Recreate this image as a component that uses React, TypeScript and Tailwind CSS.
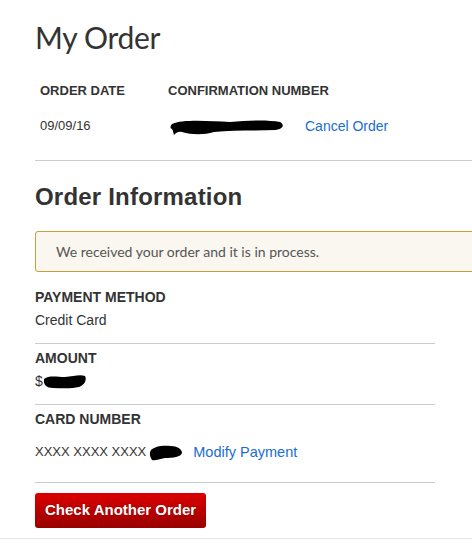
import React from "react";

const arial = "font-['Liberation_Sans',Arial,sans-serif]";
const lato = "font-['Lato','Open_Sans',sans-serif]";

function Blob({ w, h, d }: { w: number; h: number; d: string }) {
  return (
    <svg width={w} height={h} viewBox={`0 0 ${w} ${h}`} className="block shrink-0">
      <path d={d} fill="#000" />
    </svg>
  );
}

export default function App() {
  return (
    <div className={`w-[472px] h-[555px] bg-white overflow-hidden text-[#333] ${arial}`}>
      <div className="pl-[35px] pt-[19px]">
        <h1 className={`${lato} text-[30px] leading-[36px] text-[#333] font-normal tracking-[-0.3px]`}>My Order</h1>

        <div className="pl-[5px] mt-[28px]">
          <div className="flex text-[13px] leading-[16px] font-bold text-[#333]">
            <div className="w-[128px]">ORDER DATE</div>
            <div>CONFIRMATION NUMBER</div>
          </div>
          <div className="flex items-center h-[16px] mt-[19px] text-[13px] leading-[16px]">
            <div className="w-[130px]">09/09/16</div>
            <Blob
              w={114}
              h={20}
              d="M2 8 C 12 3, 40 5, 60 6 C 80 4, 100 4, 110 6 C 115 9, 113 13, 106 14 C 85 15, 62 14, 44 16 C 34 19, 22 19, 12 16 C 8 15, 6 17, 4 19 C 3 16, 3 14, 2 13 C 0 12, 0 10, 2 8 Z"
            />
            <a className="ml-[21px] text-[14px] text-[#1a6dd3]">Cancel Order</a>
          </div>
        </div>

        <div className="mt-[26px] border-t border-[#cccccc]" />

        <h2 className="mt-[22px] text-[24px] leading-[28px] font-bold text-[#333] tracking-[0.2px]">Order Information</h2>

        <div className="mt-[20px] w-[460px] h-[41px] border border-[#c99d38] bg-[#faf7f0] rounded-[3px] flex items-center pl-[20px]">
          <span className={`${lato} text-[14px] text-[#555]`}>We received your order and it is in process.</span>
        </div>

        <div className="w-[400px]">
          <div className="mt-[17px] text-[14px] leading-[17px] font-bold">PAYMENT METHOD</div>
          <div className="mt-[6px] text-[14px] leading-[17px]">Credit Card</div>
          <div className="mt-[14px] border-t border-[#cccccc]" />

          <div className="mt-[6px] text-[14px] leading-[17px] font-bold">AMOUNT</div>
          <div className="mt-[6px] flex items-center h-[17px] text-[14px] leading-[17px]">
            <span>$</span>
            <Blob
              w={44}
              h={17}
              d="M1 6 C 6 2, 14 4, 22 4 C 30 3, 38 1, 42 3 C 44 6, 42 12, 36 14 C 28 16, 18 15, 10 15 C 4 15, 0 12, 1 6 Z"
            />
          </div>
          <div className="mt-[14px] border-t border-[#cccccc]" />

          <div className="mt-[6px] text-[14px] leading-[17px] font-bold">CARD NUMBER</div>
          <div className="mt-[16px] flex items-center h-[16px]">
            <span className="text-[13px] leading-[16px]">XXXX XXXX XXXX</span>
            <span className="ml-[3px]">
              <Blob
                w={34}
                h={19}
                d="M2 7 C 6 3, 14 2, 22 3 C 28 3, 33 6, 33 10 C 32 14, 24 15, 16 15 C 10 16, 6 18, 3 17 C 1 14, 0 10, 2 7 Z"
              />
            </span>
            <a className="ml-[10px] text-[14.5px] leading-[16px] text-[#1a6dd3]">Modify Payment</a>
          </div>
          <div className="mt-[22px] border-t border-[#cccccc]" />
        </div>

        <button className="mt-[10px] h-[35px] px-[10px] rounded-[3px] bg-gradient-to-b from-[#dc0000] to-[#980000] text-white text-[15px] font-bold [text-shadow:0_0_1px_rgba(0,0,0,0.3)]">
          Check Another Order
        </button>
      </div>
      <div className="mt-[10px] border-t border-[#e5e5e5]" />
    </div>
  );
}
